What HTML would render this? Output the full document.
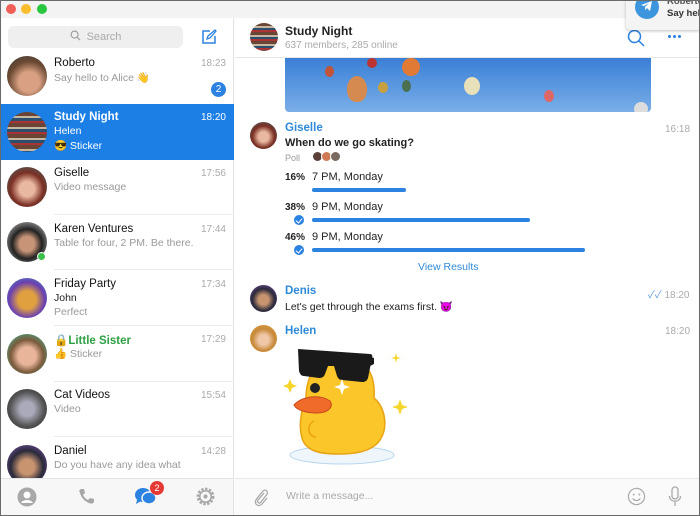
<!DOCTYPE html>
<html><head><meta charset="utf-8"><style>
*{margin:0;padding:0;box-sizing:border-box}
body{width:700px;height:516px;overflow:hidden;background:#fff;font-family:"Liberation Sans","Noto Sans CJK SC",sans-serif;position:relative;font-size:11px;color:#222}
.a{position:absolute;white-space:nowrap}
.frame{position:absolute;inset:0;border:1px solid #6a6a6a;pointer-events:none}
.dot{position:absolute;top:4px;width:10px;height:10px;border-radius:50%}
.av{position:absolute;border-radius:50%;overflow:hidden}
.row .n{position:absolute;left:54px;font-size:11.5px;color:#111}
.t{position:absolute;right:8px;font-size:10px;color:#aaa}
.g{color:#999;font-size:10.5px}
.sep{position:absolute;left:40px;right:0;height:1px;background:#ececec}
.bar{position:absolute;height:4px;background:#2b82e0;border-radius:2px;left:312px}
.chk{position:absolute;left:294px;width:10px;height:10px;border-radius:50%;background:#2b82e0}
.chk:after{content:"";position:absolute;left:3px;top:2px;width:3px;height:5px;border:solid #fff;border-width:0 1.5px 1.5px 0;transform:rotate(40deg)}
</style></head><body>
<div class="a" style="left:0;top:0;width:700px;height:18px;background:#f3f3f3"></div>
<div class="dot" style="left:6px;background:#f05f57"></div>
<div class="dot" style="left:21px;background:#f8bd2d"></div>
<div class="dot" style="left:37px;background:#29c640"></div>
<div class="a" style="left:0;top:18px;width:234px;height:460px;background:#fff;border-right:1px solid #e3e3e3"></div>
<div class="a" style="left:8px;top:26px;width:175px;height:22px;background:#efefef;border-radius:6px;color:#aaa;font-size:11px;text-align:center;line-height:22px">
<svg width="11" height="11" viewBox="0 0 12 12" style="vertical-align:-1px;margin-right:6px"><circle cx="5" cy="5" r="3.8" fill="none" stroke="#999" stroke-width="1.2"/><path d="M8 8l3 3" stroke="#999" stroke-width="1.2"/></svg>Search</div>
<svg class="a" style="left:201px;top:29px" width="16" height="16" viewBox="0 0 16 16"><path d="M9 2H2v12h12V7" fill="none" stroke="#2b82e0" stroke-width="1.5"/><path d="M6 10l1-3 7-6 1 1-6 7z" fill="none" stroke="#2b82e0" stroke-width="1.3"/></svg>

<div class="a row" style="left:0;top:52px;width:234px;height:52px">
<div class="av" style="left:7px;top:4px;width:40px;height:40px;background:radial-gradient(circle at 55% 65%,#d9a083 30%,#6b4a33 60%,#3a3a3a)"></div>
<div class="n" style="top:5px">Roberto</div><div class="t" style="top:6px">18:23</div>
<div class="a g" style="left:54px;top:19px">Say hello to Alice 👋</div>
<div class="a" style="left:211px;top:30px;width:15px;height:15px;border-radius:50%;background:#2b82e0;color:#fff;font-size:10px;text-align:center;line-height:15px">2</div>
</div>
<div class="a row" style="left:0;top:104px;width:234px;height:56px;background:#1c7fe6">
<div class="av" style="left:7px;top:8px;width:40px;height:40px;background:repeating-linear-gradient(#6a4536 0 4px,#c7b6a0 4px 6px,#2b4f6c 6px 9px,#a33 9px 11px)"></div>
<div class="n" style="top:7px;color:#fff;font-weight:bold">Study Night</div><div class="t" style="top:8px;color:#fff">18:20</div>
<div class="a" style="left:54px;top:21px;color:#fff;font-size:10.5px">Helen</div>
<div class="a" style="left:54px;top:35px;color:#fff;font-size:10.5px">😎 Sticker</div>
</div>
<div class="a row" style="left:0;top:160px;width:234px;height:55px">
<div class="av" style="left:7px;top:7px;width:40px;height:40px;background:radial-gradient(circle at 50% 55%,#e9b8a0 25%,#7b2f24 55%,#3b6d6b)"></div>
<div class="n" style="top:7px">Giselle</div><div class="t" style="top:8px">17:56</div>
<div class="a g" style="left:54px;top:21px">Video message</div>
<div class="sep" style="left:54px;bottom:0"></div></div>
<div class="a row" style="left:0;top:215px;width:234px;height:55px">
<div class="av" style="left:7px;top:7px;width:40px;height:40px;background:radial-gradient(circle at 50% 55%,#c89478 25%,#222 50%,#ddd)"></div>
<div class="a" style="left:37px;top:37px;width:9px;height:9px;border-radius:50%;background:#3bbf4a;border:1.5px solid #fff"></div>
<div class="n" style="top:8px">Karen Ventures</div><div class="t" style="top:9px">17:44</div>
<div class="a g" style="left:54px;top:22px">Table for four, 2 PM. Be there.</div>
<div class="sep" style="left:54px;bottom:0"></div></div>
<div class="a row" style="left:0;top:270px;width:234px;height:56px">
<div class="av" style="left:7px;top:8px;width:40px;height:40px;background:radial-gradient(circle at 50% 55%,#e0a040 30%,#6a3fb0 60%,#45a0c8)"></div>
<div class="n" style="top:8px">Friday Party</div><div class="t" style="top:9px">17:34</div>
<div class="a" style="left:54px;top:22px;font-size:10.5px">John</div>
<div class="a g" style="left:54px;top:36px">Perfect</div>
<div class="sep" style="left:54px;bottom:0"></div></div>
<div class="a row" style="left:0;top:326px;width:234px;height:56px">
<div class="av" style="left:7px;top:8px;width:40px;height:40px;background:radial-gradient(circle at 50% 55%,#e8b49a 30%,#7b5a3c 55%,#2cc6a0)"></div>
<div class="n" style="top:7px;color:#2ea043;font-weight:bold">🔒Little Sister</div><div class="t" style="top:8px">17:29</div>
<div class="a g" style="left:54px;top:21px">👍 Sticker</div>
<div class="sep" style="left:54px;bottom:0"></div></div>
<div class="a row" style="left:0;top:382px;width:234px;height:55px">
<div class="av" style="left:7px;top:7px;width:40px;height:40px;background:radial-gradient(circle at 50% 50%,#aab 25%,#555 60%,#222)"></div>
<div class="n" style="top:7px">Cat Videos</div><div class="t" style="top:8px">15:54</div>
<div class="a g" style="left:54px;top:21px">Video</div>
<div class="sep" style="left:54px;bottom:0"></div></div>
<div class="a row" style="left:0;top:437px;width:234px;height:41px;overflow:hidden">
<div class="av" style="left:7px;top:8px;width:40px;height:40px;background:radial-gradient(circle at 50% 55%,#c89470 25%,#2a2a3a 55%,#8a5ac0)"></div>
<div class="n" style="top:8px">Daniel</div><div class="t" style="top:9px">14:28</div>
<div class="a g" style="left:54px;top:22px">Do you have any idea what</div>
</div>
<div class="a" style="left:0;top:478px;width:234px;height:38px;background:#f7f7f7;border-top:1px solid #e3e3e3;border-right:1px solid #e3e3e3"></div>
<svg class="a" style="left:17px;top:487px" width="20" height="20" viewBox="0 0 20 20"><circle cx="10" cy="10" r="9.5" fill="#a8a8a8"/><circle cx="10" cy="8" r="3.5" fill="#fff"/><path d="M4 16c2-4 10-4 12 0" fill="#fff"/></svg>
<svg class="a" style="left:77px;top:487px" width="20" height="20" viewBox="0 0 20 20"><path d="M4 2l3 0 1 4-2 2c1 2 3 4 5 5l2-2 4 1v3c-1 2-3 2-5 1C7 14 4 10 3 6 2 4 2 3 4 2z" fill="#a8a8a8"/></svg>
<svg class="a" style="left:134px;top:484px" width="26" height="24" viewBox="0 0 26 24"><ellipse cx="9" cy="11" rx="8" ry="7" fill="#2b82e0"/><path d="M3 16l-1 4 5-3z" fill="#2b82e0"/><ellipse cx="15" cy="14" rx="7" ry="6" fill="#2b82e0" stroke="#f7f7f7" stroke-width="1.5"/></svg>
<div class="a" style="left:150px;top:481px;width:14px;height:14px;border-radius:50%;background:#e53935;color:#fff;font-size:9px;text-align:center;line-height:14px">2</div>
<svg class="a" style="left:195px;top:486px" width="21" height="21" viewBox="0 0 20 20"><circle cx="10" cy="10" r="7" fill="none" stroke="#a8a8a8" stroke-width="3" stroke-dasharray="2.2 1.4"/><circle cx="10" cy="10" r="5.5" fill="none" stroke="#a8a8a8" stroke-width="1.5"/><circle cx="10" cy="10" r="2" fill="#a8a8a8"/></svg>
<div class="a" style="left:235px;top:18px;width:465px;height:40px;background:#fff;border-bottom:1px solid #e8e8e8"></div>
<div class="av" style="left:250px;top:23px;width:28px;height:28px;background:repeating-linear-gradient(#6a4536 0 3px,#c7b6a0 3px 5px,#2b4f6c 5px 7px,#a33 7px 9px)"></div>
<div class="a" style="left:285px;top:24px;font-size:12px;font-weight:bold">Study Night</div>
<div class="a" style="left:285px;top:40px;font-size:10px;color:#aaa">637 members, 285 online</div>
<svg class="a" style="left:627px;top:29px" width="18" height="18" viewBox="0 0 18 18"><circle cx="7.5" cy="7.5" r="6" fill="none" stroke="#2b82e0" stroke-width="1.5"/><path d="M12 12l5 5" stroke="#2b82e0" stroke-width="1.5"/></svg>
<div class="a" style="left:667px;top:35px;width:14px;height:3px;background:radial-gradient(circle,#2b82e0 1.4px,transparent 1.6px) 0 0/5px 3px"></div>
<div class="a" style="left:626px;top:0;width:74px;height:30px;background:#f4f4f4;border-radius:0 0 0 4px;box-shadow:0 1px 3px rgba(0,0,0,.25);overflow:hidden">
<div class="a" style="left:41px;top:-4px;font-size:9.5px;font-weight:bold;color:#555">Roberto</div>
<div class="a" style="left:41px;top:8px;font-size:9.5px;font-weight:bold;color:#333">Say hel</div>
</div>
<div class="a" style="left:635px;top:-5px;width:24px;height:24px;border-radius:50%;background:#3d95dd"></div>
<svg class="a" style="left:640px;top:0" width="14" height="12" viewBox="0 0 14 12"><path d="M1 5l11-4-2 10-3-3-2 2 0-3 4-4-5 3z" fill="#fff"/></svg>
<div class="a" style="left:285px;top:58px;width:366px;height:54px;background:linear-gradient(#3a7fd6,#7aaee8);border-radius:0 0 4px 4px;overflow:hidden">
<div class="a" style="left:40px;top:8px;width:9px;height:11px;border-radius:50%;background:#c2543a"></div>
<div class="a" style="left:62px;top:18px;width:20px;height:26px;border-radius:50% 50% 45% 45%;background:#d58a50"></div>
<div class="a" style="left:82px;top:0;width:10px;height:10px;border-radius:50%;background:#b33"></div>
<div class="a" style="left:93px;top:24px;width:10px;height:11px;border-radius:50%;background:#c9a040"></div>
<div class="a" style="left:117px;top:0;width:18px;height:18px;border-radius:50%;background:#e07a35"></div>
<div class="a" style="left:117px;top:22px;width:9px;height:12px;border-radius:50%;background:#4a7050"></div>
<div class="a" style="left:179px;top:19px;width:16px;height:18px;border-radius:50%;background:#e8e0b8"></div>
<div class="a" style="left:259px;top:32px;width:10px;height:12px;border-radius:50%;background:#d66"></div>
<div class="a" style="left:349px;top:44px;width:14px;height:14px;border-radius:50%;background:#ddd"></div>
</div>
<div class="av" style="left:250px;top:122px;width:27px;height:27px;background:radial-gradient(circle at 50% 55%,#e9b8a0 25%,#7b2f24 55%,#3b6d6b)"></div>
<div class="a" style="left:285px;top:122px;font-size:11.5px;color:#2e8ad8;font-weight:bold">Giselle</div>
<div class="a" style="left:665px;top:124px;font-size:10px;color:#aaa">16:18</div>
<div class="a" style="left:285px;top:137px;font-size:11px;font-weight:bold">When do we go skating?</div>
<div class="a" style="left:285px;top:153px;font-size:9px;color:#999">Poll</div>
<div class="a" style="left:312px;top:151px;width:11px;height:11px;border-radius:50%;background:#5a4038;border:1px solid #fff"></div>
<div class="a" style="left:321px;top:151px;width:11px;height:11px;border-radius:50%;background:#d07a55;border:1px solid #fff"></div>
<div class="a" style="left:330px;top:151px;width:11px;height:11px;border-radius:50%;background:#7a6a60;border:1px solid #fff"></div>
<div class="a" style="left:285px;top:172px;font-size:10px;font-weight:bold">16%</div><div class="a" style="left:312px;top:171px;font-size:11px">7 PM, Monday</div>
<div class="bar" style="top:188px;width:94px"></div>
<div class="a" style="left:285px;top:202px;font-size:10px;font-weight:bold">38%</div><div class="a" style="left:312px;top:201px;font-size:11px">9 PM, Monday</div>
<div class="chk" style="top:215px"></div><div class="bar" style="top:218px;width:218px"></div>
<div class="a" style="left:285px;top:232px;font-size:10px;font-weight:bold">46%</div><div class="a" style="left:312px;top:231px;font-size:11px">9 PM, Monday</div>
<div class="chk" style="top:245px"></div><div class="bar" style="top:248px;width:273px"></div>
<div class="a" style="left:418px;top:261px;font-size:10.5px;color:#2e8ad8">View Results</div>
<div class="av" style="left:250px;top:285px;width:27px;height:27px;background:radial-gradient(circle at 50% 55%,#c89470 25%,#2a2a3a 55%,#8a5ac0)"></div>
<div class="a" style="left:285px;top:285px;font-size:11.5px;color:#2e8ad8;font-weight:bold">Denis</div>
<div class="a" style="left:648px;top:286px;font-size:10px;color:#aaa"><span style="color:#5a9ad8">✓✓</span> 18:20</div>
<div class="a" style="left:285px;top:300px;font-size:10.5px">Let's get through the exams first. 😈</div>
<div class="av" style="left:250px;top:325px;width:27px;height:27px;background:radial-gradient(circle at 50% 55%,#f0c8a8 25%,#c78a3a 55%,#e0a040)"></div>
<div class="a" style="left:285px;top:325px;font-size:11.5px;color:#2e8ad8;font-weight:bold">Helen</div>
<div class="a" style="left:665px;top:326px;font-size:10px;color:#aaa">18:20</div>
<svg class="a" style="left:282px;top:343px" width="130" height="125" viewBox="0 0 130 125">
<ellipse cx="60" cy="112" rx="52" ry="9" fill="#eef5fb" stroke="#b8d6ee" stroke-width="1"/>
<path d="M24 55c0-25 14-42 36-42s34 17 32 42c12 10 14 30 6 42-8 12-26 14-42 14s-32-2-36-16c-4-14 0-30 4-40z" fill="#fbc62a" stroke="#e7a312" stroke-width="1.5"/>
<path d="M32 78c-8 4-6 16 2 16" fill="none" stroke="#e7a312" stroke-width="1.5"/>
<path d="M12 62c8-9 26-11 36-4 4 6-2 12-13 12-11 0-21-3-23-8z" fill="#f06a2a" stroke="#c84a1a" stroke-width="1"/>
<circle cx="33" cy="45" r="5" fill="#222"/>
<path d="M16 6l72 5c2 0 3 2 2 4l-4 20c-1 3-3 4-6 4l-20-2c-3 0-4-2-5-4l-3-10-6 0-3 8c-1 3-3 4-6 4l-15-2c-3 0-4-2-5-5z" fill="#1a1a1a"/>
<path d="M88 14l4 1 0 6-4 2z" fill="#1a1a1a"/>
<path d="M60 36l2 6 6 2-6 2-2 6-2-6-6-2 6-2z" fill="#fff"/>
<path d="M118 56l2 6 6 2-6 2-2 6-2-6-6-2 6-2z" fill="#f5d52a"/>
<path d="M114 10l1 4 4 1-4 1-1 4-1-4-4-1 4-1z" fill="#f5d52a"/>
<path d="M8 36l2 5 5 2-5 2-2 5-2-5-5-2 5-2z" fill="#f5d52a"/>
</svg>
<div class="a" style="left:235px;top:478px;width:465px;height:38px;background:#fafafa;border-top:1px solid #e8e8e8"></div>
<svg class="a" style="left:254px;top:487px" width="14" height="20" viewBox="0 0 14 20"><path d="M10 6l-6 7c-1.5 2 1 4 2.5 2.5l6-7.5c2.5-3-1-6.5-3.5-4l-6.5 8c-3.5 4.5 2 9 5.5 5l5-6" fill="none" stroke="#aaa" stroke-width="1.3"/></svg>
<div class="a" style="left:286px;top:490px;font-size:10.5px;color:#aaa">Write a message...</div>
<svg class="a" style="left:627px;top:487px" width="19" height="19" viewBox="0 0 20 20"><circle cx="10" cy="10" r="8.5" fill="none" stroke="#aaa" stroke-width="1.3"/><circle cx="7" cy="8" r="1" fill="#aaa"/><circle cx="13" cy="8" r="1" fill="#aaa"/><path d="M6 12c2 3 6 3 8 0" fill="none" stroke="#aaa" stroke-width="1.3"/></svg>
<svg class="a" style="left:668px;top:486px" width="14" height="22" viewBox="0 0 14 22"><rect x="4" y="1" width="6" height="12" rx="3" fill="none" stroke="#aaa" stroke-width="1.3"/><path d="M1.5 10c0 7 11 7 11 0M7 16v4" fill="none" stroke="#aaa" stroke-width="1.3"/></svg>
<div class="frame"></div>
</body></html>
